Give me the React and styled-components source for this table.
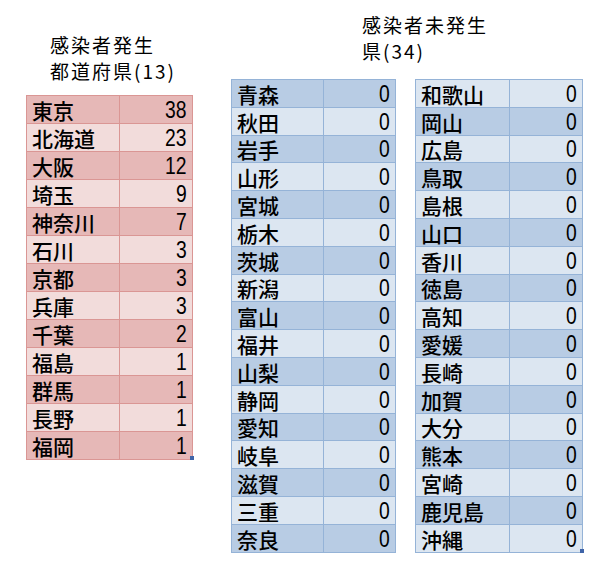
import styled, { createGlobalStyle } from "styled-components";

const GlobalStyle = createGlobalStyle`
  body {
    margin: 0;
    background: #ffffff;
    font-family: "Noto Sans CJK JP", "Liberation Sans", sans-serif;
    color: #000000;
  }
`;

const palettes = {
  pink: { dark: "#e6b8b7", light: "#f2dcdb", line: "#da9694" },
  blue: { dark: "#b8cce4", light: "#dce6f1", line: "#95b3d7" },
};

const Page = styled.div`
  width: 608px;
  height: 580px;
  display: flex;
  align-items: flex-start;
  padding-left: 26px;
  box-sizing: border-box;
`;

const LeftGroup = styled.div`
  display: flex;
  flex-direction: column;
  padding-top: 32px;
`;

const RightGroup = styled.div`
  display: flex;
  flex-direction: column;
  margin-left: 38px;
  padding-top: 12px;
`;

const Title = styled.div`
  font-size: 19px;
  line-height: 26px;
  letter-spacing: 2px;
  padding-left: ${(p) => p.$indent}px;
  margin-bottom: ${(p) => p.$gap}px;
  white-space: nowrap;
`;

const Tables = styled.div`
  display: flex;
  gap: 19px;
`;

const Sheet = styled.div`
  position: relative;
  display: grid;
  grid-template-columns: ${(p) => p.$first}px ${(p) => p.$second}px;
  border-top: 1px solid ${(p) => palettes[p.$tone].line};
  border-left: 1px solid ${(p) => palettes[p.$tone].line};
`;

const Cell = styled.div`
  height: ${(p) => p.$h}px;
  box-sizing: border-box;
  border-right: 1px solid ${(p) => palettes[p.$tone].line};
  border-bottom: 1px solid ${(p) => palettes[p.$tone].line};
  background: ${(p) => (p.$dark ? palettes[p.$tone].dark : palettes[p.$tone].light)};
  display: flex;
  align-items: flex-end;
  overflow: hidden;
`;

const Name = styled(Cell)`
  padding: 0 0 0 5px;
  font-size: 21px;
  font-weight: 500;
  line-height: 26px;
`;

const Count = styled(Cell)`
  justify-content: flex-end;
  padding-right: 5px;
  font-family: "Liberation Sans", sans-serif;
  font-size: 23px;
  line-height: 26px;
`;

const Digits = styled.span`
  display: inline-block;
  transform: scaleX(0.84);
  transform-origin: right center;
`;

const Handle = styled.span`
  position: absolute;
  right: -1px;
  bottom: 0px;
  width: 4px;
  height: 4px;
  background: #3f64a8;
`;

const infected = [
  ["東京", 38],
  ["北海道", 23],
  ["大阪", 12],
  ["埼玉", 9],
  ["神奈川", 7],
  ["石川", 3],
  ["京都", 3],
  ["兵庫", 3],
  ["千葉", 2],
  ["福島", 1],
  ["群馬", 1],
  ["長野", 1],
  ["福岡", 1],
];

const clearA = [
  "青森", "秋田", "岩手", "山形", "宮城", "栃木", "茨城", "新潟", "富山",
  "福井", "山梨", "静岡", "愛知", "岐阜", "滋賀", "三重", "奈良",
];

const clearB = [
  "和歌山", "岡山", "広島", "鳥取", "島根", "山口", "香川", "徳島", "高知",
  "愛媛", "長崎", "加賀", "大分", "熊本", "宮崎", "鹿児島", "沖縄",
];

function DataSheet({ rows, tone, first, second, rowHeight, darkFirst, handle }) {
  return (
    <Sheet $tone={tone} $first={first} $second={second}>
      {rows.map(([name, n], i) => {
        const dark = darkFirst ? i % 2 === 0 : i % 2 === 1;
        return [
          <Name key={name + "n"} $tone={tone} $dark={dark} $h={rowHeight}>
            {name}
          </Name>,
          <Count key={name + "c"} $tone={tone} $dark={dark} $h={rowHeight}>
            <Digits>{n}</Digits>
          </Count>,
        ];
      })}
      {handle && <Handle />}
    </Sheet>
  );
}

export default function App() {
  return (
    <Page>
      <GlobalStyle />
      <LeftGroup>
        <Title $indent={24} $gap={11}>
          感染者発生
          <br />
          都道府県(13)
        </Title>
        <DataSheet
          rows={infected}
          tone="pink"
          first={93}
          second={73}
          rowHeight={28}
          darkFirst
          handle
        />
      </LeftGroup>
      <RightGroup>
        <Title $indent={131} $gap={15}>
          感染者未発生
          <br />
          県(34)
        </Title>
        <Tables>
          <DataSheet
            rows={clearA.map((n) => [n, 0])}
            tone="blue"
            first={92}
            second={72}
            rowHeight={27.8}
            darkFirst
          />
          <DataSheet
            rows={clearB.map((n) => [n, 0])}
            tone="blue"
            first={94}
            second={73}
            rowHeight={27.8}
            darkFirst={false}
            handle
          />
        </Tables>
      </RightGroup>
    </Page>
  );
}
